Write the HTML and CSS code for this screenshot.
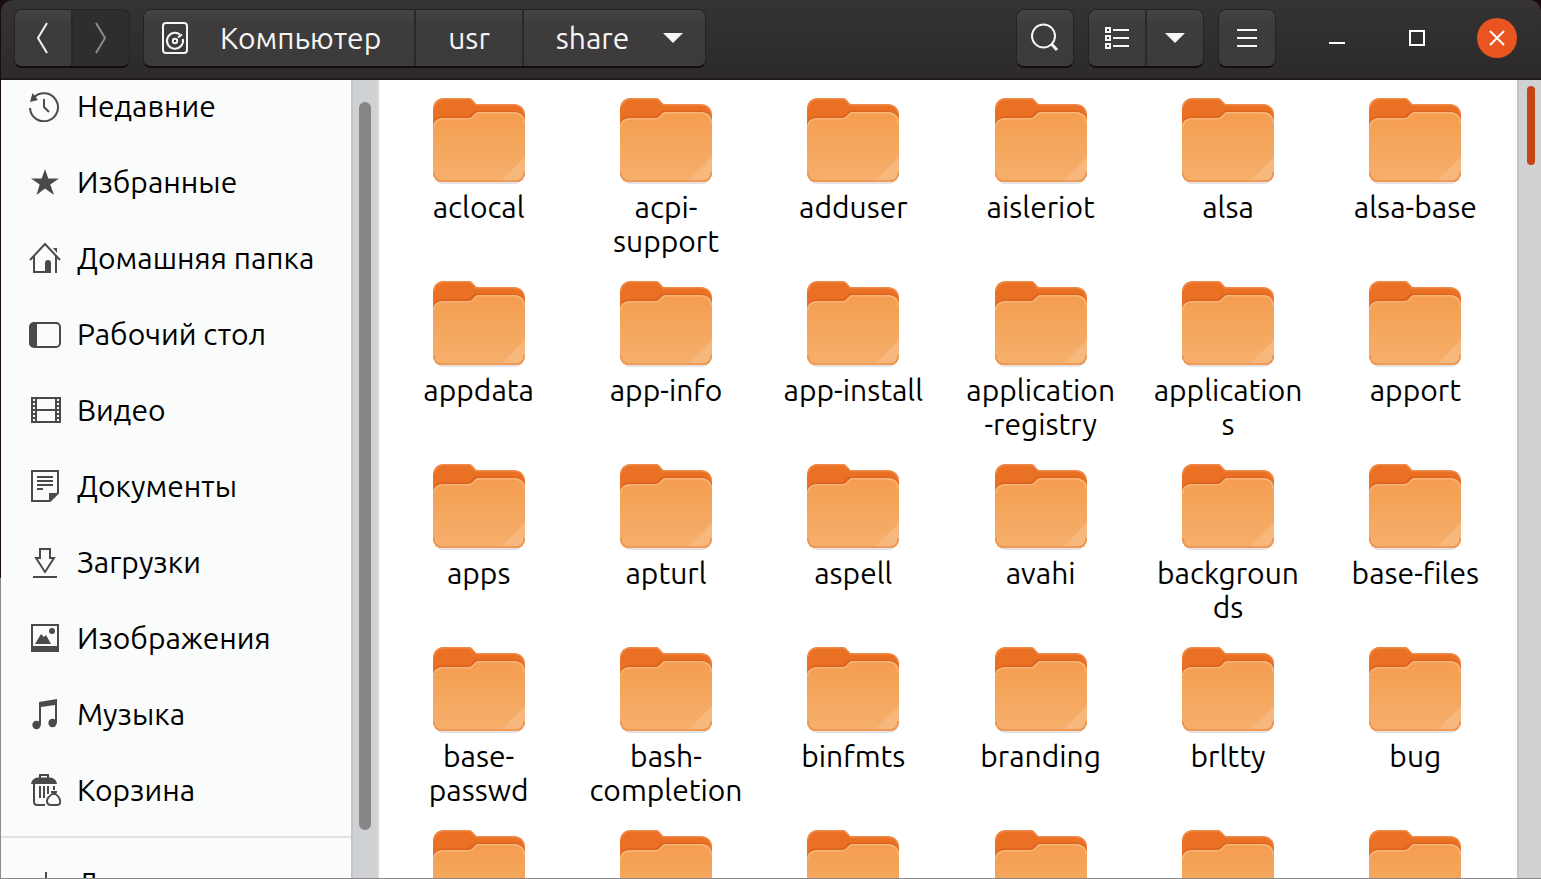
FILE: index.html
```
<!DOCTYPE html>
<html lang="ru">
<head>
<meta charset="utf-8">
<title>share</title>
<link rel="stylesheet" href="styles.css">
<script src="files.js" defer></script>
</head>
<body>
<svg class="defs" width="0" height="0" aria-hidden="true">
  <defs>
    <linearGradient id="front" x1="0" y1="0" x2="0" y2="1">
      <stop offset="0" stop-color="#f49d50"/><stop offset="1" stop-color="#f6b06c"/>
    </linearGradient>
    <symbol id="folder" viewBox="0 0 92 86">
      <path d="M2 76v4q2 6 9 6h70q7 0 9-6v-4z" fill="#e4e2e4"/>
      <path d="M0 12Q0 0 12 0H36Q38 0 39.500 2L43 6H80Q92 7 92 18V74Q92 84 82 84H10Q0 84 0 74Z" fill="#ea7124"/>
      <path d="M1 9Q3 .8 12 .8H36Q38 1 39 2.500L43 6.800H80Q89 7 91 14" fill="none" stroke="#ee8b4a" stroke-width="1.600"/>
      <path d="M0 28Q0 18 11 18H36L42 12.500H80Q92 13 92 25" fill="#dd6520"/>
      <path d="M0 30Q0 20 12 20H36Q38 20 39.500 18.500L43 15Q44 14 46 14H80Q92 14 92 26V74Q92 84 82 84H10Q0 84 0 74Z" fill="url(#front)"/>
      <path d="M92 59V74Q92 83 83 83H68Z" fill="#f6b87d"/>
      <path d="M.800 29Q1 20.800 12 20.800H36Q38 20.800 39.500 19.300L43 15.800Q44 14.800 46 14.800H80Q91 15 91.200 25" fill="none" stroke="#f8b478" stroke-width="1.600"/>
      <path d="M.800 74Q.800 83 10 83H82Q91.200 83 91.200 74" fill="none" stroke="#ee9450" stroke-width="1.600"/>
    </symbol>
  </defs>
</svg>
<div class="window">
  <header class="header">
    <div class="group">
      <button class="btn" type="button" aria-label="Назад"><svg width="32" height="32" viewBox="0 0 32 32"><path d="M20 1L11 16L20 31" class="line"/></svg></button>
      <button class="btn btn-off" type="button" aria-label="Вперёд" disabled><svg width="32" height="32" viewBox="0 0 32 32"><path d="M11 1L20 16L11 31" class="line"/></svg></button>
    </div>
    <nav class="group path">
      <button class="btn crumb crumb-root" type="button"><svg width="28" height="32" viewBox="0 0 28 32"><rect x="2" y="1" width="24" height="30" rx="3" class="line"/><path d="M19 12.500A8 8 0 1 0 21.800 17M17 15.500L21 12.500" class="line"/><circle cx="14" cy="19" r="2.200" class="line"/></svg>Компьютер</button>
      <button class="btn crumb" type="button">usr</button>
      <button class="btn crumb crumb-last" type="button">share<svg width="20" height="10" viewBox="0 0 20 10"><path d="M0 0H20L10 10Z" fill="currentColor"/></svg></button>
    </nav>
    <div class="tools">
      <div class="group"><button class="btn" type="button" aria-label="Поиск"><svg width="32" height="32" viewBox="0 0 32 32"><circle cx="14.500" cy="14" r="11.500" class="line"/><path d="M22.500 22L28 28" class="line thick"/></svg></button></div>
      <div class="group">
        <button class="btn" type="button" aria-label="Вид списком"><svg width="24" height="24" viewBox="0 0 24 24"><path d="M1 2h4v4H1zM1 10h4v4H1zM1 18h4v4H1zM8 4H24M8 12H24M8 20H24" class="line"/></svg></button>
        <button class="btn" type="button" aria-label="Параметры вида"><svg width="20" height="10" viewBox="0 0 20 10"><path d="M0 0H20L10 10Z" fill="currentColor"/></svg></button>
      </div>
      <div class="group"><button class="btn" type="button" aria-label="Меню"><svg width="20" height="20" viewBox="0 0 20 20"><path d="M0 2H20M0 10H20M0 18H20" class="line"/></svg></button></div>
      <div class="controls">
        <button class="ctl" type="button" aria-label="Свернуть"><svg width="16" height="16" viewBox="0 0 16 16"><path d="M0 13H16" class="line"/></svg></button>
        <button class="ctl" type="button" aria-label="Развернуть"><svg width="16" height="16" viewBox="0 0 16 16"><path d="M1 1H15V15H1Z" class="line"/></svg></button>
        <button class="ctl ctl-close" type="button" aria-label="Закрыть"><svg width="16" height="16" viewBox="0 0 16 16"><path d="M1 1L15 15M15 1L1 15" class="line"/></svg></button>
      </div>
    </div>
  </header>
  <div class="body">
    <aside class="sidebar">
      <nav class="places">
        <a class="place" href="#"><svg class="icon" viewBox="0 0 32 32"><path d="M4.500 8A14 14 0 1 1 1 18M15 9V17L20 22" class="line"/><path d="M3.500 3L1 12L9 10Z" fill="currentColor"/></svg>Недавние</a>
        <a class="place" href="#"><svg class="icon" viewBox="0 0 32 32"><path d="M16 3L19.300 12.500H30L21.300 18.500L25 29L16 22.600L7.500 29L10.700 18.500L2 12.500H12.700Z" fill="currentColor"/></svg>Избранные</a>
        <a class="place" href="#"><svg class="icon" viewBox="0 0 32 32"><path d="M1 18L16 2L31 18M5 14V30H22M27 14V31" class="line"/><path d="M16 31V21Q16 18 19 18Q22 18 22 21V31ZM24 6h4v5z" fill="currentColor"/></svg>Домашняя папка</a>
        <a class="place" href="#"><svg class="icon" viewBox="0 0 32 32"><rect x="1" y="5" width="30" height="24" rx="4" class="line"/><path d="M1 9Q1 5 5 5H8V29H5Q1 29 1 25Z" fill="currentColor"/></svg>Рабочий стол</a>
        <a class="place" href="#"><svg class="icon" viewBox="0 0 32 32"><path d="M2 4H32M2 28H32M3 4V29M7 4V29M27 4V29M31 4V29M7 16H27M3 8h4M3 12h4M3 16h4M3 20h4M3 24h4M27 8h4M27 12h4M27 16h4M27 20h4M27 24h4" class="line"/></svg>Видео</a>
        <a class="place" href="#"><svg class="icon" viewBox="0 0 32 32"><path d="M3 1H29V23L21 31H3ZM8 7H24M8 11H24M8 15H24M8 19H14" class="line"/><path d="M20 31V23H29Z" fill="currentColor"/></svg>Документы</a>
        <a class="place" href="#"><svg class="icon" viewBox="0 0 32 32"><path d="M11 3H21V12H25L16 26L7 12H11ZM4 31H28" class="line"/></svg>Загрузки</a>
        <a class="place" href="#"><svg class="icon" viewBox="0 0 32 32"><path d="M3 3H29V29H3Z" class="line"/><path d="M2 24H30V30H2ZM6 22L12 12L15 15L17 13L22 22Z" fill="currentColor"/><circle cx="23" cy="9" r="3" fill="currentColor"/></svg>Изображения</a>
        <a class="place" href="#"><svg class="icon" viewBox="0 0 32 32"><path d="M10 4L28 1V25H26V7L12 9V27H10Z" fill="currentColor"/><circle cx="7.500" cy="27" r="4.200" fill="currentColor"/><circle cx="23.500" cy="25" r="4.200" fill="currentColor"/></svg>Музыка</a>
        <a class="place" href="#"><svg class="icon" viewBox="0 0 32 32"><path d="M11 4V1H19V4M5 9V28Q5 31 8 31H16M11 12V24M15 12V24M19 12V20M25 12V16M22 18H28" class="line"/><path d="M2 10Q3 4 9 3.500H21Q27 4 28 10Z" fill="currentColor"/><path d="M25 19Q18 23 18 27Q18 31 22 31H28Q32 31 31 26Q30 22 25 19Z" class="line"/></svg>Корзина</a>
      </nav>
      <nav class="places places-more">
        <a class="place" href="#"><svg class="icon" viewBox="0 0 32 32"><path d="M17 5V29M5 17H29" class="line"/></svg>Другие места</a>
      </nav>
    </aside>
    <div class="track track-side"><div class="thumb"></div></div>
    <main class="files" id="files"></main>
    <div class="track track-main"><div class="thumb"></div></div>
  </div>
</div>
</body>
</html>
```

FILE: styles.css
```
* { box-sizing: border-box; }
body {
  margin: 0;
  background: linear-gradient(#1a0a12 0 578px, #8c8c8c 578px);
  font: 30px/34px Ubuntu, "Noto Sans", sans-serif;
  color: #000;
}
.defs { position: absolute; }
.window {
  height: 100vh;
  margin-left: 1px;
  display: flex;
  flex-direction: column;
  border-bottom: 1px solid #888;
  overflow: hidden;
}
.line { fill: none; stroke: currentColor; stroke-width: 2; }
.thick { stroke-width: 3; }

.header {
  flex: none;
  display: flex;
  align-items: center;
  gap: 13px;
  height: 80px;
  padding: 0 24px 2px 13px;
  color: #f6f5f4;
  background: linear-gradient(#353432, #2c2a2a);
  border-bottom: 2px solid #1f1b1d;
  border-radius: 12px 12px 0 0;
}
.group {
  display: flex;
  border: 1px solid #242322;
  border-bottom: 2px solid #130b0e;
  border-radius: 8px;
  overflow: hidden;
}
.btn {
  display: flex;
  align-items: center;
  justify-content: center;
  min-width: 56px;
  height: 56px;
  padding: 0;
  border: 0;
  font: inherit;
  color: inherit;
  background: linear-gradient(#444341, #3d3c3b 30%, #3c3a3b);
}
.btn + .btn { border-left: 2px solid #2a2928; min-width: 58px; }
.btn-off { color: #8b8a89; background: #2f2e2c; }
.crumb { padding: 0 32px; }
.crumb-root { padding: 0 33px 0 17px; gap: 31px; }
.crumb-last { gap: 34px; padding: 0 22px 0 32px; }
.tools { display: flex; align-items: center; gap: 14px; margin-left: auto; }
.controls { display: flex; gap: 40px; margin-left: 27px; }
.ctl {
  display: flex;
  align-items: center;
  justify-content: center;
  width: 40px;
  height: 40px;
  padding: 0;
  border: 0;
  border-radius: 50%;
  color: #fff;
  background: none;
}
.ctl-close { background: #e95420; }

.body { flex: 1; display: flex; min-height: 0; }
.sidebar { flex: none; width: 350px; background: #fafcfb; overflow: hidden; }
.places { margin-top: -12px; padding-bottom: 8px; }
.places-more { margin-top: 0; padding-top: 7px; border-top: 2px solid #e0e1e1; }
.place {
  display: flex;
  align-items: center;
  gap: 16px;
  height: 76px;
  padding-left: 28px;
  color: inherit;
  text-decoration: none;
  white-space: nowrap;
}
.icon { flex: none; width: 32px; height: 32px; color: #4a4a4a; }
.track { flex: none; background: #d0d1d3; border-left: 2px solid #c0c5ce; }
.track-side { width: 28px; padding: 22px 6px 48px; border-right: 2px solid #d8d9da; }
.track-main { width: 24px; padding: 6px 6px 0 8px; }
.thumb { height: 100%; border-radius: 6px; background: #868686; }
.track-main .thumb { height: 10%; background: #c64415; }
.files {
  flex: 1;
  display: grid;
  grid-template-columns: repeat(6, 1fr);
  align-content: start;
  row-gap: 23px;
  padding: 18px 8px 0 6px;
  background: #fff;
  overflow: hidden;
}
.file {
  display: flex;
  flex-direction: column;
  align-items: center;
  gap: 6px;
  color: inherit;
  text-align: center;
  text-decoration: none;
}
.folder { width: 92px; height: 86px; }
.name { white-space: pre-line; }
```

FILE: files.js
```
const names = [
  "aclocal", "acpi-\nsupport", "adduser", "aisleriot", "alsa", "alsa-base",
  "appdata", "app-info", "app-install", "application\n-registry", "application\ns", "apport",
  "apps", "apturl", "aspell", "avahi", "backgroun\nds", "base-files",
  "base-\npasswd", "bash-\ncompletion", "binfmts", "branding", "brltty", "bug",
  "", "", "", "", "", ""
];
document.getElementById("files").innerHTML = names.map(name =>
  `<a class="file" href="#"><svg class="folder"><use href="#folder"/></svg><span class="name">${name}</span></a>`
).join("");
```
